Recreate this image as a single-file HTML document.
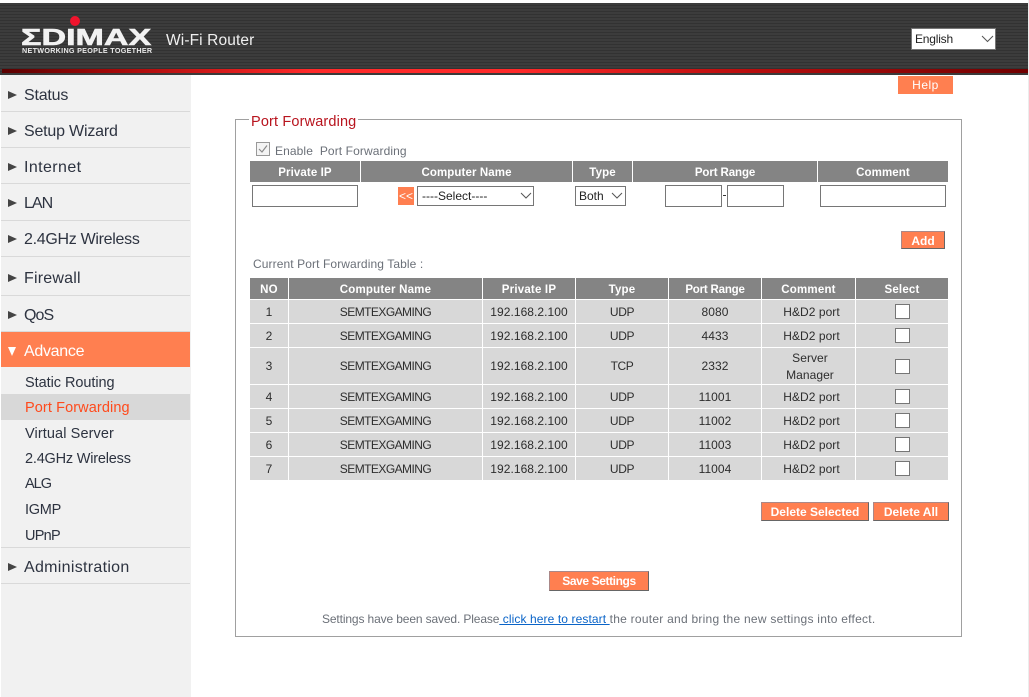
<!DOCTYPE html>
<html><head><meta charset="utf-8"><title>Edimax Wi-Fi Router</title>
<style>
html,body{margin:0;padding:0;background:#fff}
body{width:1029px;height:697px;position:relative;overflow:hidden;font-family:"Liberation Sans",Arial,sans-serif;color:#333}
.a{position:absolute;white-space:nowrap}
#hdr{left:0;top:3px;width:1028px;height:72px;background:repeating-linear-gradient(180deg,#3c3c3c 0,#3c3c3c 2px,#323232 2px,#323232 3px)}
#bar{left:2px;top:69px;width:1026px;height:4px;background:linear-gradient(90deg,#5a0000 0,#a00808 10%,#ff2a2a 30%,#ff2a2a 50%,#c01010 70%,#700000 100%)}
#bar0{left:0;top:73px;width:1028px;height:2px;background:#3a3a3a}
#side{left:1px;top:75px;width:190px;height:622px;background:#f1f1f1}
.m{left:1px;width:189px;font-size:16px;line-height:20px;color:#2d3340}
.m span{position:absolute;left:23px;top:0}
.m i{position:absolute;left:7px;top:5px;width:0;height:0;border-left:9px solid #444;border-top:4px solid transparent;border-bottom:4px solid transparent}
.ln{left:1px;width:189px;height:1px;background:#d9d9d9}
.s{left:25px;font-size:14.5px;line-height:18px;color:#2d3340}
.g{color:#6b7078;font-size:12px;letter-spacing:.1px;line-height:16px}
.th{background:#848484;color:#fff;font-weight:bold;font-size:11.5px;text-align:center;letter-spacing:.1px;top:161px;height:21px;line-height:24px}
.box{background:#fff;border:1px solid #767676;box-sizing:border-box}
.sel{background:#fff;border:1px solid #767676;box-sizing:border-box;font-size:12px;color:#222;line-height:19px;padding-left:4px}
.sel svg{position:absolute;top:5px}
.btn{background:#ff7f50;color:#fff;font-weight:bold;font-size:12px;text-align:center;box-sizing:border-box;border-right:1px solid #666;border-bottom:1px solid #666;border-top:1px solid #a88;border-left:1px solid #a88}
table{position:absolute;left:249px;top:277px;border-collapse:separate;border-spacing:1px;table-layout:fixed;width:700px}
th{background:#848484;color:#fff;font-size:11.5px;height:19px;padding:2px 0 0;letter-spacing:.2px}
td{background:#d8d8d8;color:#2d2d2d;font-size:12px;text-align:center;padding:1px 0 0;height:22px;line-height:17px;letter-spacing:.05px}
td.tall{height:35px}
td.n{letter-spacing:-.55px}
td.u{letter-spacing:-.4px}
td.c{padding-left:6px;width:auto}
td.k{padding-top:0}
td b{display:block;width:13px;height:13px;margin:0 auto;background:#fff;border:1px solid #767676}
</style></head><body>
<div class="a" id="hdr"></div>
<div class="a" id="bar"></div>
<div class="a" id="bar0"></div>
<div class="a" style="left:70px;top:16px;width:10px;height:10px;border-radius:50%;background:#f0142d"></div>
<div class="a" style="left:21px;top:25px;font-size:24px;line-height:28px;font-weight:bold;color:#f2f2f2;-webkit-text-stroke:.6px #f2f2f2;width:131px;transform-origin:0 0;transform:scale(1.42,.95)">ΣDIMAX</div>
<div class="a" style="left:22px;top:46px;font-size:7.2px;line-height:9px;font-weight:bold;color:#e8e8e8;letter-spacing:.29px">NETWORKING PEOPLE TOGETHER</div>
<div class="a" style="left:166px;top:31px;font-size:15.5px;line-height:20px;color:#f0f0f0;letter-spacing:.12px">Wi-Fi Router</div>
<div class="a sel" style="left:911px;top:28px;width:85px;height:22px;border:1px solid #777;font-size:12px;line-height:20px;padding-left:3px;letter-spacing:-.2px">English<svg style="left:69px;top:6px" width="13" height="8" viewBox="0 0 13 8"><path d="M1 1L6.500 6.500L12 1" fill="none" stroke="#555"/></svg></div>

<div class="a" style="left:1028px;top:0;width:1px;height:697px;background:#ececec"></div>
<div class="a" id="side"></div>

<div class="a m" style="top:86px;letter-spacing:-.2px"><i></i><span>Status</span></div><div class="a ln" style="top:111px"></div>
<div class="a m" style="top:122px;letter-spacing:-.2px"><i></i><span>Setup Wizard</span></div><div class="a ln" style="top:147px"></div>
<div class="a m" style="top:158px;letter-spacing:.4px"><i></i><span>Internet</span></div><div class="a ln" style="top:183px"></div>
<div class="a m" style="top:194px;letter-spacing:-1px"><i></i><span>LAN</span></div><div class="a ln" style="top:220px"></div>
<div class="a m" style="top:230px;letter-spacing:-.3px"><i></i><span>2.4GHz Wireless</span></div><div class="a ln" style="top:256px"></div>
<div class="a m" style="top:269px;letter-spacing:.2px"><i></i><span>Firewall</span></div><div class="a ln" style="top:295px"></div>
<div class="a m" style="top:306px;letter-spacing:-.9px"><i></i><span>QoS</span></div><div class="a ln" style="top:331px"></div>
<div class="a" style="left:1px;top:332px;width:189px;height:35px;background:#ff7f50"></div>
<div class="a m" style="top:342px;color:#fff;letter-spacing:-.3px"><i style="left:7px;top:5px;border:4px solid transparent;border-left-width:4.500px;border-right-width:4.500px;border-bottom:0;border-top:9px solid #fff"></i><span>Advance</span></div>
<div class="a" style="left:1px;top:394px;width:189px;height:26px;background:#d8d8d8"></div>
<div class="a s" style="top:374px;letter-spacing:-.05px">Static Routing</div>
<div class="a s" style="top:399px;color:#ff4a1c;letter-spacing:.1px">Port Forwarding</div>
<div class="a s" style="top:425px;letter-spacing:.1px">Virtual Server</div>
<div class="a s" style="top:450px;letter-spacing:-.2px">2.4GHz Wireless</div>
<div class="a s" style="top:475px;letter-spacing:-1px">ALG</div>
<div class="a s" style="top:501px;letter-spacing:-.25px">IGMP</div>
<div class="a s" style="top:527px;letter-spacing:-.75px">UPnP</div>
<div class="a ln" style="top:547px"></div>
<div class="a m" style="top:558px;letter-spacing:.3px"><i></i><span>Administration</span></div><div class="a ln" style="top:583px"></div>

<div class="a" style="left:898px;top:76px;width:55px;height:18px;background:#ff7f50;color:#fff;font-size:12px;line-height:19px;text-align:center;letter-spacing:.5px">Help</div>

<div class="a" style="left:235px;top:119px;width:727px;height:518px;border:1px solid #a0a0a0;box-sizing:border-box"></div>
<div class="a" style="left:249px;top:113px;background:#fff;padding:1px 2px 0;font-size:14.500px;line-height:17px;color:#b8141e;letter-spacing:.15px">Port Forwarding</div>

<div class="a" style="left:256px;top:142px;width:12px;height:12px;border:1px solid #999;background:#f4f4f4"><svg style="position:absolute;left:0;top:0" width="12" height="12" viewBox="0 0 12 12"><path d="M2 6L5 9L10 2.500" fill="none" stroke="#8a8a8a" stroke-width="1.200"/></svg></div>
<div class="a g" style="left:275px;top:143px">Enable &nbsp;Port Forwarding</div>

<div class="a th" style="left:250px;width:110px">Private IP</div>
<div class="a th" style="left:361px;width:211px">Computer Name</div>
<div class="a th" style="left:573px;width:59px">Type</div>
<div class="a th" style="left:633px;width:184px;letter-spacing:-.1px">Port Range</div>
<div class="a th" style="left:818px;width:130px">Comment</div>

<div class="a box" style="left:252px;top:185px;width:106px;height:22px"></div>
<div class="a" style="left:398px;top:187px;width:16px;height:18px;background:#ff7f50;color:#fff;font-size:12px;line-height:18px;text-align:center">&lt;&lt;</div>
<div class="a sel" style="left:417px;top:186px;width:117px;height:20px">----Select----<svg style="left:102px" width="12" height="8" viewBox="0 0 12 8"><path d="M1 1L6 6L11 1" fill="none" stroke="#555"/></svg></div>
<div class="a sel" style="left:575px;top:186px;width:51px;height:20px;padding-left:3px">Both<svg style="left:35px" width="12" height="8" viewBox="0 0 12 8"><path d="M1 1L6 6L11 1" fill="none" stroke="#555"/></svg></div>
<div class="a box" style="left:665px;top:185px;width:57px;height:22px"></div>
<div class="a" style="left:723px;top:195px;width:3px;height:1px;background:#333"></div>
<div class="a box" style="left:727px;top:185px;width:57px;height:22px"></div>
<div class="a box" style="left:820px;top:185px;width:126px;height:22px"></div>

<div class="a btn" style="left:901px;top:231px;width:44px;height:18px;line-height:18px">Add</div>
<div class="a g" style="left:253px;top:256px">Current Port Forwarding Table :</div>

<table>
<colgroup><col style="width:38px"><col style="width:193px"><col style="width:92px"><col style="width:92px"><col style="width:92px"><col style="width:93px"><col style="width:92px"></colgroup>
<tr><th>NO</th><th>Computer Name</th><th>Private IP</th><th>Type</th><th style="letter-spacing:-.2px">Port Range</th><th>Comment</th><th>Select</th></tr>
<tr><td>1</td><td class="n">SEMTEXGAMING</td><td>192.168.2.100</td><td class="u">UDP</td><td>8080</td><td class="c">H&amp;D2 port</td><td class="k"><b></b></td></tr>
<tr><td>2</td><td class="n">SEMTEXGAMING</td><td>192.168.2.100</td><td class="u">UDP</td><td>4433</td><td class="c">H&amp;D2 port</td><td class="k"><b></b></td></tr>
<tr><td class="tall">3</td><td class="n">SEMTEXGAMING</td><td>192.168.2.100</td><td class="u">TCP</td><td>2332</td><td style="padding-left:3px">Server<br>Manager</td><td class="k"><b></b></td></tr>
<tr><td>4</td><td class="n">SEMTEXGAMING</td><td>192.168.2.100</td><td class="u">UDP</td><td>11001</td><td class="c">H&amp;D2 port</td><td class="k"><b></b></td></tr>
<tr><td>5</td><td class="n">SEMTEXGAMING</td><td>192.168.2.100</td><td class="u">UDP</td><td>11002</td><td class="c">H&amp;D2 port</td><td class="k"><b></b></td></tr>
<tr><td>6</td><td class="n">SEMTEXGAMING</td><td>192.168.2.100</td><td class="u">UDP</td><td>11003</td><td class="c">H&amp;D2 port</td><td class="k"><b></b></td></tr>
<tr><td>7</td><td class="n">SEMTEXGAMING</td><td>192.168.2.100</td><td class="u">UDP</td><td>11004</td><td class="c">H&amp;D2 port</td><td class="k"><b></b></td></tr>
</table>

<div class="a btn" style="left:761px;top:502px;width:108px;height:19px;line-height:18px;letter-spacing:0">Delete Selected</div>
<div class="a btn" style="left:873px;top:502px;width:76px;height:19px;line-height:18px;letter-spacing:0">Delete All</div>
<div class="a btn" style="left:549px;top:571px;width:100px;height:20px;line-height:19px;letter-spacing:-.4px">Save Settings</div>

<div class="a g" style="left:322px;top:611px;letter-spacing:-.13px">Settings have been saved. Please<span style="color:#0a64c8;text-decoration:underline;letter-spacing:.1px"> click here to restart </span><span style="letter-spacing:.25px">the router and bring the new settings into effect.</span></div>
</body></html>
